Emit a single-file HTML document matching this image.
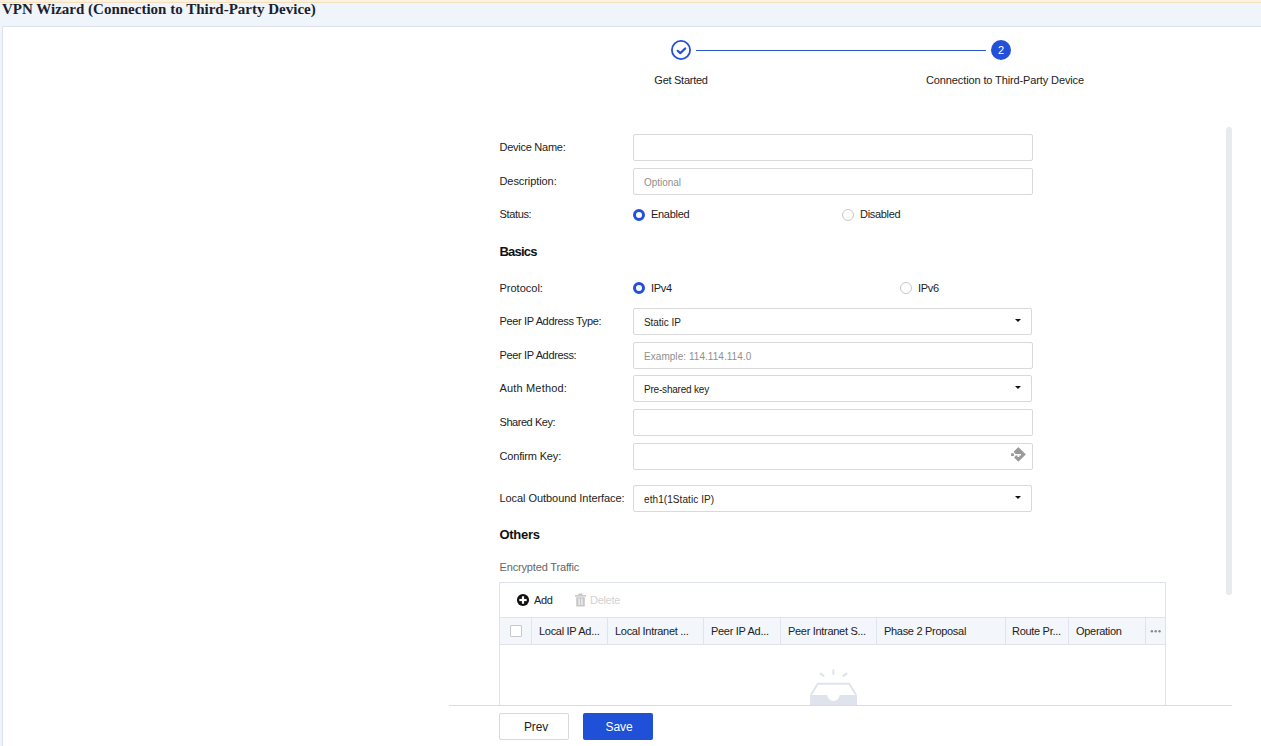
<!DOCTYPE html>
<html>
<head>
<meta charset="utf-8">
<style>
html,body{margin:0;padding:0;}
body{width:1261px;height:746px;overflow:hidden;position:relative;background:#f0f4fb;font-family:"Liberation Sans",sans-serif;color:#222;}
.a{position:absolute;white-space:nowrap;}
#topstrip{position:absolute;left:0;top:0;width:1261px;height:2px;background:#fdf1df;}
#topline{position:absolute;left:0;top:2px;width:1261px;height:1px;background:#f4dfbf;}
#title{position:absolute;left:2px;top:2px;font-family:"Liberation Serif",serif;font-weight:700;font-size:15px;line-height:15px;color:#1b1f2e;white-space:nowrap;}
#panel{position:absolute;left:2px;top:26px;width:1259px;height:720px;background:#fff;border-left:1px solid #dde2ec;border-top:1px solid #dde2ec;box-sizing:border-box;}
.lbl{position:absolute;left:499.5px;font-size:11px;line-height:11px;letter-spacing:-0.35px;color:#222;white-space:nowrap;}
.h{position:absolute;left:499.5px;font-size:13px;line-height:13px;font-weight:700;color:#111;white-space:nowrap;letter-spacing:-0.3px;}
.box{position:absolute;left:633px;width:400px;height:27px;box-sizing:border-box;border:1px solid #d9d9d9;border-radius:2px;background:#fff;}
.sel{width:399px;}
.val{position:absolute;left:10px;font-size:10px;line-height:10px;color:#222;white-space:nowrap;letter-spacing:-0.05px;}
.ph{color:#8f8f8f;}
.arr{position:absolute;right:10px;top:10px;width:0;height:0;border-left:3px solid transparent;border-right:3px solid transparent;border-top:3.6px solid #111;}
.radio{position:absolute;width:12px;height:12px;box-sizing:border-box;border-radius:50%;}
.on{border:3.6px solid #2350d8;background:#fff;}
.off{border:1px solid #c8c8c8;background:#fff;}
.th{top:625.5px;font-size:11px;line-height:11px;letter-spacing:-0.3px;color:#222;}
.rt{position:absolute;font-size:11px;line-height:11px;letter-spacing:-0.3px;color:#222;white-space:nowrap;}
</style>
</head>
<body>
<div id="topstrip"></div><div id="topline"></div>
<div id="title">VPN Wizard (Connection to Third-Party Device)</div>
<div id="panel"></div>

<!-- stepper -->
<svg class="a" style="left:0;top:0" width="1261" height="100">
  <circle cx="681" cy="50" r="9.1" fill="#fff" stroke="#2350d8" stroke-width="1.8"/>
  <path d="M677.7 50.8 L680.3 53.1 L685.2 48.5" fill="none" stroke="#2350d8" stroke-width="2.2" stroke-linecap="round" stroke-linejoin="round"/>
  <rect x="696" y="50" width="290" height="1" fill="#2d55cc"/>
  <circle cx="1001" cy="50" r="10" fill="#2350d8"/>
</svg>
<div class="a" style="left:991px;top:45px;width:20px;text-align:center;font-size:11px;line-height:11px;color:#fff;">2</div>
<div class="a" style="left:581px;top:75px;width:200px;text-align:center;font-size:11px;line-height:11px;letter-spacing:-0.27px;">Get Started</div>
<div class="a" style="left:855px;top:75px;width:300px;text-align:center;font-size:11px;line-height:11px;letter-spacing:-0.12px;">Connection to Third-Party Device</div>

<!-- form -->
<div class="lbl" style="top:141.7px;letter-spacing:-0.26px">Device Name:</div>
<div class="box" style="top:134px"></div>
<div class="lbl" style="top:175.7px;letter-spacing:-0.08px">Description:</div>
<div class="box" style="top:168px"><div class="val ph" style="top:8.5px">Optional</div></div>
<div class="lbl" style="top:208.7px;letter-spacing:-0.35px">Status:</div>
<div class="radio on" style="left:633px;top:209px"></div>
<div class="rt" style="left:651px;top:208.7px">Enabled</div>
<div class="radio off" style="left:842px;top:209px"></div>
<div class="rt" style="left:860px;top:208.7px">Disabled</div>

<div class="h" style="top:245px;letter-spacing:-0.8px">Basics</div>

<div class="lbl" style="top:282.7px;letter-spacing:0.0px">Protocol:</div>
<div class="radio on" style="left:633px;top:282px"></div>
<div class="rt" style="left:651px;top:282.7px">IPv4</div>
<div class="radio off" style="left:900px;top:282px"></div>
<div class="rt" style="left:918px;top:282.7px">IPv6</div>

<div class="lbl" style="top:315.7px;letter-spacing:-0.35px">Peer IP Address Type:</div>
<div class="box sel" style="top:308px"><div class="val" style="top:8.5px">Static IP</div><div class="arr"></div></div>
<div class="lbl" style="top:349.7px;letter-spacing:-0.35px">Peer IP Address:</div>
<div class="box" style="top:342px"><div class="val ph" style="top:8.5px;letter-spacing:0.05px">Example: 114.114.114.0</div></div>
<div class="lbl" style="top:382.7px;letter-spacing:0.17px">Auth Method:</div>
<div class="box sel" style="top:375px"><div class="val" style="top:8.5px;letter-spacing:-0.2px">Pre-shared key</div><div class="arr"></div></div>
<div class="lbl" style="top:416.7px;letter-spacing:-0.45px">Shared Key:</div>
<div class="box" style="top:409px"></div>
<div class="lbl" style="top:450.7px;letter-spacing:-0.17px">Confirm Key:</div>
<div class="box" style="top:443px"></div>
<div class="lbl" style="top:492.7px;letter-spacing:-0.06px">Local Outbound Interface:</div>
<div class="box sel" style="top:485px"><div class="val" style="top:8.5px;letter-spacing:0.08px">eth1(1Static IP)</div><div class="arr"></div></div>

<div class="h" style="top:527.5px">Others</div>
<div class="lbl" style="top:561.7px;color:#666;letter-spacing:-0.16px">Encrypted Traffic</div>

<!-- key icon -->
<svg class="a" style="left:1008px;top:444px" width="22" height="22" viewBox="0 0 22 22">
  <path d="M10.4 3.9 L17 10.4 L10.4 16.9 L6.5 13 L6.5 7.8 Z" fill="#9a9a9a" stroke="#9a9a9a" stroke-width="1.3" stroke-linejoin="round"/>
  <path d="M5.4 7.8 L7.6 9.9 L13.1 9.9 L13.1 11.5 L11.3 11.5 L11.3 12.9 L9.6 12.9 L9.6 11.5 L7.6 11.5 L6.4 13.6 L5.4 13.6 Z" fill="#fff"/>
  <rect x="3" y="9.2" width="2.9" height="2.7" rx="0.5" fill="#9a9a9a"/>
</svg>

<!-- table -->
<div class="a" style="left:499px;top:582px;width:667px;height:140px;box-sizing:border-box;border:1px solid #dfe3ee;border-bottom:none;background:#fff;"></div>
<svg class="a" style="left:516px;top:593px" width="14" height="14" viewBox="0 0 14 14">
  <circle cx="7" cy="7" r="6.1" fill="#111"/>
  <rect x="5.9" y="3.3" width="2.2" height="7.4" fill="#fff"/>
  <rect x="3.3" y="5.9" width="7.4" height="2.2" fill="#fff"/>
</svg>
<div class="a" style="left:534px;top:595px;font-size:11px;line-height:11px;letter-spacing:-0.3px;color:#222;">Add</div>
<svg class="a" style="left:574px;top:593px" width="13" height="14" viewBox="0 0 13 14">
  <rect x="1" y="2" width="11" height="1.6" fill="#c8c8c8"/>
  <rect x="4.5" y="0.5" width="4" height="2" fill="#c8c8c8"/>
  <path d="M2.2 4.2 H10.8 V13.5 H2.2 Z" fill="#c8c8c8"/>
  <rect x="4.6" y="5.5" width="1" height="6.5" fill="#fff"/>
  <rect x="7.4" y="5.5" width="1" height="6.5" fill="#fff"/>
</svg>
<div class="a" style="left:590px;top:595px;font-size:11px;line-height:11px;letter-spacing:-0.3px;color:#d2d2d2;">Delete</div>

<div class="a" style="left:500px;top:617px;width:665px;height:28px;box-sizing:border-box;background:#f3f6fa;border-top:1px solid #dfe3ee;border-bottom:1px solid #dfe3ee;"></div>
<div class="a" style="left:531px;top:618px;width:1px;height:26px;background:#dfe3ee"></div>
<div class="a" style="left:607px;top:618px;width:1px;height:26px;background:#dfe3ee"></div>
<div class="a" style="left:703px;top:618px;width:1px;height:26px;background:#dfe3ee"></div>
<div class="a" style="left:780px;top:618px;width:1px;height:26px;background:#dfe3ee"></div>
<div class="a" style="left:876px;top:618px;width:1px;height:26px;background:#dfe3ee"></div>
<div class="a" style="left:1005px;top:618px;width:1px;height:26px;background:#dfe3ee"></div>
<div class="a" style="left:1068px;top:618px;width:1px;height:26px;background:#dfe3ee"></div>
<div class="a" style="left:1145px;top:618px;width:1px;height:26px;background:#dfe3ee"></div>
<div class="a" style="left:510px;top:625px;width:12px;height:12px;box-sizing:border-box;border:1px solid #c8c8c8;border-radius:1px;background:#fff;"></div>
<div class="a th" style="left:539px;">Local IP Ad...</div>
<div class="a th" style="left:615px;">Local Intranet ...</div>
<div class="a th" style="left:711px;">Peer IP Ad...</div>
<div class="a th" style="left:788px;">Peer Intranet S...</div>
<div class="a th" style="left:884px;">Phase 2 Proposal</div>
<div class="a th" style="left:1012px;">Route Pr...</div>
<div class="a th" style="left:1076px;">Operation</div>
<svg class="a" style="left:1149px;top:628px" width="14" height="5" viewBox="0 0 14 5">
  <circle cx="2.9" cy="3.2" r="1.2" fill="#8a8a8a"/><circle cx="6.7" cy="3.2" r="1.2" fill="#8a8a8a"/><circle cx="10.5" cy="3.2" r="1.2" fill="#8a8a8a"/>
</svg>

<!-- empty icon -->
<svg class="a" style="left:800px;top:660px" width="70" height="50" viewBox="0 0 70 50">
  <g stroke="#dfe3ee" stroke-width="2.1" stroke-linecap="round" fill="none">
    <path d="M33.4 10.4 V14.1"/>
    <path d="M20.6 13.6 L23.5 15.9"/>
    <path d="M46.5 13.6 L43.5 15.9"/>
  </g>
  <path d="M11 34.8 L17.8 23.8 H49.2 L56 34.8" fill="none" stroke="#dfe3ee" stroke-width="2" stroke-linejoin="round"/>
  <path d="M10 34.9 H27.2 A6.2 6.2 0 0 0 39.6 34.9 H57 V50 H10 Z" fill="#dfe3ee"/>
</svg>

<!-- footer -->
<div class="a" style="left:449px;top:705px;width:783px;height:41px;background:#fff;border-top:1px solid #dcdcdc;"></div>
<div class="a" style="left:499px;top:713px;width:70px;height:27px;box-sizing:border-box;border:1px solid #d9d9d9;border-radius:2px;background:#fff;"></div>
<div class="a" style="left:501px;top:720.5px;width:70px;text-align:center;font-size:12px;line-height:12px;letter-spacing:-0.2px;color:#222;">Prev</div>
<div class="a" style="left:583px;top:713px;width:70px;height:27px;box-sizing:border-box;border-radius:2px;background:#204fd8;"></div>
<div class="a" style="left:584px;top:720.5px;width:70px;text-align:center;font-size:12px;line-height:12px;letter-spacing:-0.1px;color:#fff;">Save</div>

<!-- scrollbar -->
<div class="a" style="left:1226px;top:127px;width:6px;height:468px;border-radius:3px;background:#e9eaec;"></div>

</body>
</html>
